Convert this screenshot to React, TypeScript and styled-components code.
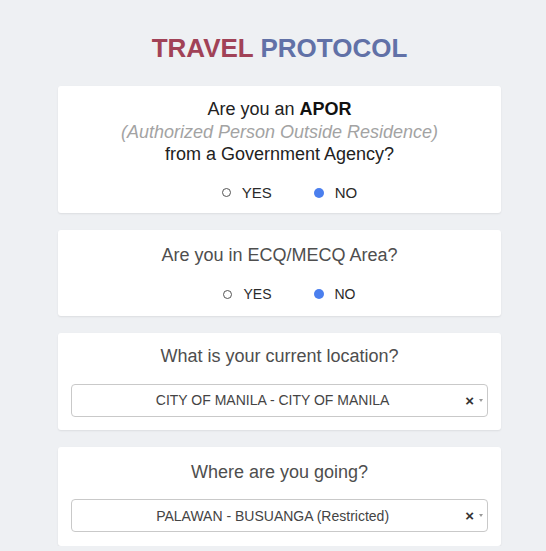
import styled, { createGlobalStyle } from "styled-components";

const GlobalStyle = createGlobalStyle`
  body {
    margin: 0;
    background: #eef0f3;
    font-family: "Liberation Sans", Arial, sans-serif;
  }
`;

const Page = styled.div`
  width: 443px;
  padding: 33px 45px 0 58px;
  display: flex;
  flex-direction: column;
  gap: 17px;
`;

const Title = styled.h1`
  margin: 0 0 6px;
  font-size: 26px;
  line-height: 30px;
  font-weight: bold;
  text-align: center;
  color: #a14257;
  span {
    color: #6171a7;
  }
`;

const Card = styled.div<{ $pad?: string }>`
  background: #fff;
  border-radius: 3px;
  box-shadow: 0 1px 2px rgba(0, 0, 0, 0.08);
  padding: ${(p) => p.$pad || "12px 13px 13px"};
  text-align: center;
`;

const Question = styled.div<{ $dark?: boolean }>`
  font-size: 18px;
  line-height: 22.5px;
  color: ${(p) => (p.$dark ? "#222" : "#4e4e4e")};
  b {
    color: #111;
  }
  em {
    color: #a3a3a3;
  }
`;

const RadioGroup = styled.div<{ $top: number; $size: number }>`
  display: flex;
  justify-content: center;
  gap: 42px;
  padding-left: 20px;
  margin-top: ${(p) => p.$top}px;
  font-size: ${(p) => p.$size}px;
  line-height: 20px;
  color: #2a2a2a;
`;

const RadioItem = styled.label`
  display: flex;
  align-items: center;
  gap: 11px;
`;

const Dot = styled.span<{ $on?: boolean }>`
  width: ${(p) => (p.$on ? 10 : 9)}px;
  height: ${(p) => (p.$on ? 10 : 9)}px;
  border-radius: 50%;
  box-sizing: border-box;
  border: ${(p) => (p.$on ? "none" : "1.5px solid #555")};
  background: ${(p) => (p.$on ? "#4b7fee" : "#fff")};
`;

const Select = styled.div`
  margin-top: 16px;
  height: 33px;
  box-sizing: border-box;
  border: 1px solid #c9c9c9;
  border-radius: 4px;
  display: flex;
  align-items: center;
  padding: 0 4px 0 8px;
  font-size: 14px;
  color: #444;
`;

const Value = styled.div`
  flex: 1;
  text-align: center;
`;

const Clear = styled.span`
  font-size: 15px;
  font-weight: bold;
  color: #333;
  margin-right: 5px;
  line-height: 1;
`;

const Arrow = styled.span`
  width: 0;
  height: 0;
  border-left: 2.5px solid transparent;
  border-right: 2.5px solid transparent;
  border-top: 3px solid #999;
`;

const Radios = ({ top, size }: { top: number; size: number }) => (
  <RadioGroup $top={top} $size={size}>
    <RadioItem>
      <Dot />
      YES
    </RadioItem>
    <RadioItem>
      <Dot $on />
      NO
    </RadioItem>
  </RadioGroup>
);

const LocationSelect = ({ value }: { value: string }) => (
  <Select>
    <Value>{value}</Value>
    <Clear>×</Clear>
    <Arrow />
  </Select>
);

export default function App() {
  return (
    <>
      <GlobalStyle />
      <Page>
        <Title>
          TRAVEL <span>PROTOCOL</span>
        </Title>
        <Card $pad="12px 13px 10px">
          <Question $dark>
            Are you an <b>APOR</b>
            <br />
            <em>(Authorized Person Outside Residence)</em>
            <br />
            from a Government Agency?
          </Question>
          <Radios top={17} size={15} />
        </Card>
        <Card $pad="14px 13px 12px">
          <Question>Are you in ECQ/MECQ Area?</Question>
          <Radios top={18} size={14} />
        </Card>
        <Card>
          <Question>What is your current location?</Question>
          <LocationSelect value="CITY OF MANILA - CITY OF MANILA" />
        </Card>
        <Card $pad="14px 13px 14px">
          <Question>Where are you going?</Question>
          <LocationSelect value="PALAWAN - BUSUANGA (Restricted)" />
        </Card>
      </Page>
    </>
  );
}
